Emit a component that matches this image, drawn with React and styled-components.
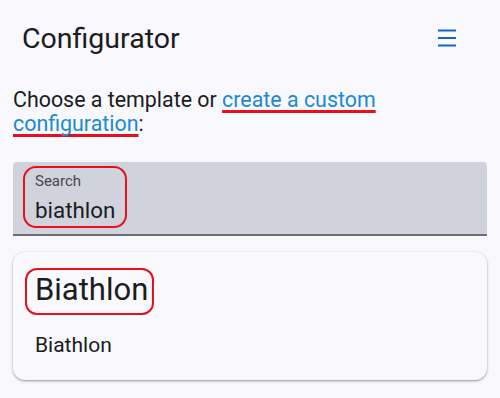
import React from "react";
import styled, { createGlobalStyle } from "styled-components";

const GlobalStyle = createGlobalStyle`
  body {
    margin: 0;
    background: #f8f8fd;
    font-family: Roboto, "Liberation Sans", sans-serif;
    color: #1b1b21;
  }
`;

const Page = styled.div`
  width: 500px;
  height: 398px;
  padding: 0 13px;
  box-sizing: border-box;
  overflow: hidden;
`;

const Header = styled.header`
  display: flex;
  align-items: center;
  justify-content: space-between;
  height: 76px;
  padding: 0 30px 0 9px;
`;

const Title = styled.h1`
  margin: 0;
  font-size: 28.5px;
  font-weight: 400;
  letter-spacing: 0;
`;

const MenuButton = styled.button`
  display: flex;
  align-items: center;
  justify-content: center;
  border: none;
  background: none;
  padding: 0;
  width: 24px;
  height: 24px;
  margin-right: -2px;
  color: #1565c0;
`;

const Intro = styled.p`
  margin: 12px 0 26px;
  font-size: 21.4px;
  line-height: 24px;
`;

// annotated link: red marker underline
const Link = styled.a`
  color: #1a8ad4;
  text-decoration: underline;
  text-decoration-color: #e8101c;
  text-decoration-thickness: 3px;
  text-underline-offset: 3px;
  text-decoration-skip-ink: none;
`;

// red hand-drawn box around a piece of text
const Marked = styled.span`
  position: relative;
  display: inline-block;
  align-self: flex-start;

  &::after {
    content: "";
    position: absolute;
    inset: ${(p) => p.$inset || "-7px -11px"};
    border: 2.5px solid #e8101c;
    border-radius: ${(p) => p.$radius || "12px"};
    pointer-events: none;
  }
`;

const SearchField = styled.label`
  display: flex;
  flex-direction: column;
  align-items: flex-start;
  height: 74px;
  box-sizing: border-box;
  padding: 9px 22px 0;
  background: #d0d3dc;
  border-radius: 4px 4px 0 0;
  border-bottom: 2px solid #6d6e74;
`;

const FieldInner = styled.span`
  display: flex;
  flex-direction: column;
  gap: 5px;
`;

const FieldLabel = styled.span`
  font-size: 15px;
  line-height: 20px;
  color: #44464f;
`;

const FieldValue = styled.span`
  font-size: 22.4px;
  line-height: 28px;
  color: #1b1b21;
`;

const Card = styled.section`
  margin-top: 16px;
  height: 128px;
  box-sizing: border-box;
  padding: 20px 22px 0;
  border-radius: 12px;
  background: #f8f8fd;
  box-shadow: 0 1px 3px rgba(0, 0, 0, 0.3), 0 1px 1px rgba(0, 0, 0, 0.12);
`;

const CardTitle = styled.h2`
  margin: 0;
  font-size: 31px;
  font-weight: 400;
  line-height: 36px;
`;

const CardText = styled.p`
  margin: 25px 0 0;
  font-size: 21px;
  line-height: 24px;
`;

export default function App() {
  return (
    <>
      <GlobalStyle />
      <Page>
        <Header>
          <Title>Configurator</Title>
          <MenuButton aria-label="menu">
            <svg width="20" height="18" viewBox="0 0 20 18">
              <path d="M1 1.5h18M1 9h18M1 16.5h18" stroke="currentColor" strokeWidth="2.2" />
            </svg>
          </MenuButton>
        </Header>

        <Intro>
          Choose a template or <Link href="#">create a custom configuration</Link>:
        </Intro>

        <SearchField>
          <Marked $inset="-5px -12px -4px -12px" $radius="13px">
            <FieldInner>
              <FieldLabel>Search</FieldLabel>
              <FieldValue>biathlon</FieldValue>
            </FieldInner>
          </Marked>
        </SearchField>

        <Card>
          <Marked $inset="-4px -6px -7px -10px" $radius="12px">
            <CardTitle>Biathlon</CardTitle>
          </Marked>
          <CardText>Biathlon</CardText>
        </Card>
      </Page>
    </>
  );
}
